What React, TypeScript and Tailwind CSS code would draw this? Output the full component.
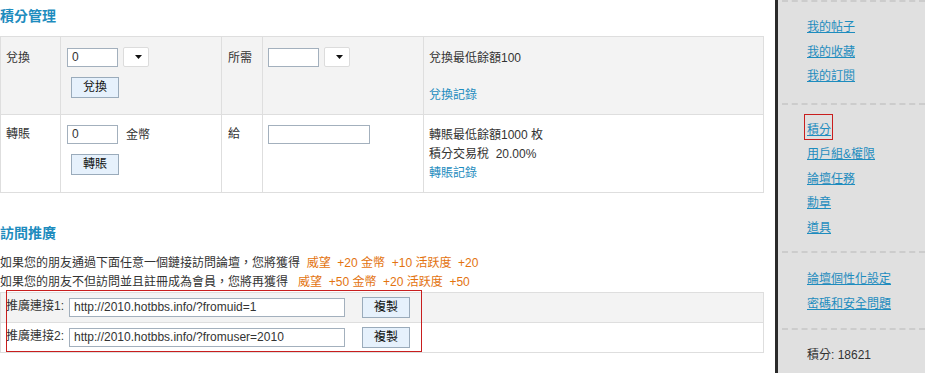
import React from 'react';

const font = "font-['Liberation_Sans','Noto_Sans_CJK_TC',sans-serif]";

function Select() {
  return (
    <div className="w-[26px] h-[20px] bg-white border border-[#dcdcdc] rounded-[2px] flex items-center justify-end pr-[6px]">
      <svg width="7" height="4" viewBox="0 0 7 4"><path d="M0 0h7L3.5 4z" fill="#111" /></svg>
    </div>
  );
}

function Btn({ label }: { label: string }) {
  return (
    <div className="w-[48px] h-[21px] bg-[#e6f1fc] border border-[#9aabbb] text-[#111] text-[12px] leading-[19px] text-center">
      {label}
    </div>
  );
}

function Input({ w, value }: { w: string; value?: string }) {
  return (
    <div className={`${w} h-[19px] bg-white border border-[#a3b0bd] text-[12px] leading-[17px] pl-[4px] text-[#333] overflow-hidden whitespace-nowrap`}>
      {value}
    </div>
  );
}

const link = 'text-[#1e8cbe]';
const orange = 'text-[#e3730f]';

function SideLink({ label, boxed }: { label: string; boxed?: boolean }) {
  return (
    <div className="h-[24.5px] flex items-center pl-[25px]">
      <span className={`${link} underline relative`}>
        {label}
        {boxed && <span className="absolute left-[-3px] top-[-7px] w-[29px] h-[26px] border border-[#c81e1e]" />}
      </span>
    </div>
  );
}

export default function App() {
  return (
    <div className={`${font} text-[12px] text-[#333] w-[925px] h-[373px] flex bg-white overflow-hidden`}>
      {/* Main */}
      <div className="w-[775px] flex flex-col">
        <div className={`h-[36px] pt-[6px] text-[14px] font-bold leading-[20px] ${link}`}>積分管理</div>
        <table className="w-[764px] border-collapse table-fixed">
          <colgroup>
            <col className="w-[60px]" />
            <col className="w-[161px]" />
            <col className="w-[41px]" />
            <col className="w-[161px]" />
            <col />
          </colgroup>
          <tbody>
            <tr className="h-[78px] bg-[#f3f3f3]">
              <td className="border border-[#dedede] align-top pt-[11px] pl-[5px] leading-[20px]">兌換</td>
              <td className="border border-[#dedede] align-top pt-[10px] pl-[6px]">
                <div className="flex gap-[5px] items-center">
                  <Input w="w-[51px]" value="0" />
                  <Select />
                </div>
                <div className="mt-[10px] ml-[4px]"><Btn label="兌換" /></div>
              </td>
              <td className="border border-[#dedede] align-top pt-[11px] pl-[6px] leading-[20px]">所需</td>
              <td className="border border-[#dedede] align-top pt-[10px] pl-[5px]">
                <div className="flex gap-[5px] items-center">
                  <Input w="w-[51px]" />
                  <Select />
                </div>
              </td>
              <td className="border border-[#dedede] align-top pt-[11px] pl-[5px] leading-[20px]">
                <div>兌換最低餘額100</div>
                <div className={`mt-[17px] ${link}`}>兌換記錄</div>
              </td>
            </tr>
            <tr className="h-[78px] bg-white">
              <td className="border border-[#dedede] align-top pt-[9px] pl-[5px] leading-[20px]">轉賬</td>
              <td className="border border-[#dedede] align-top pt-[10px] pl-[6px]">
                <div className="flex gap-[8px] items-center">
                  <Input w="w-[51px]" value="0" />
                  <span>金幣</span>
                </div>
                <div className="mt-[10px] ml-[4px]"><Btn label="轉賬" /></div>
              </td>
              <td className="border border-[#dedede] align-top pt-[9px] pl-[6px] leading-[20px]">給</td>
              <td className="border border-[#dedede] align-top pt-[10px] pl-[5px]">
                <Input w="w-[102px]" />
              </td>
              <td className="border border-[#dedede] align-top pt-[11px] pl-[5px] leading-[19px]">
                <div>轉賬最低餘額1000 枚</div>
                <div>積分交易稅&nbsp; 20.00%</div>
                <div className={link}>轉賬記錄</div>
              </td>
            </tr>
          </tbody>
        </table>

        <div className={`mt-[30px] h-[20px] text-[14px] font-bold leading-[20px] ${link}`}>訪問推廣</div>
        <div className="mt-[10px] leading-[19px] whitespace-nowrap">
          <div className="pt-[1px]">
            如果您的朋友通過下面任意一個鏈接訪問論壇，您將獲得{' '}
            <span className={orange}>&nbsp;威望&nbsp; +20 金幣&nbsp; +10 活跃度&nbsp; +20</span>
          </div>
          <div>
            如果您的朋友不但訪問並且註冊成為會員，您將再獲得{' '}
            <span className={orange}>&nbsp; 威望&nbsp; +50 金幣&nbsp; +20 活跃度&nbsp; +50</span>
          </div>
        </div>

        <div className="relative w-[764px]">
          <table className="w-full border-collapse">
            <tbody>
              <tr className="h-[30px] bg-[#f3f3f3]">
                <td className="border border-[#dedede] pl-[5px]">
                  <div className="flex items-center">
                    <span className="w-[63px] leading-[14px] -mt-[3px]">推廣連接1:</span>
                    <Input w="w-[276px]" value="http://2010.hotbbs.info/?fromuid=1" />
                    <div className="ml-[17px]"><Btn label="複製" /></div>
                  </div>
                </td>
              </tr>
              <tr className="h-[30px] bg-white">
                <td className="border border-[#dedede] pl-[5px]">
                  <div className="flex items-center">
                    <span className="w-[63px] leading-[14px] -mt-[3px]">推廣連接2:</span>
                    <Input w="w-[276px]" value="http://2010.hotbbs.info/?fromuser=2010" />
                    <div className="ml-[17px]"><Btn label="複製" /></div>
                  </div>
                </td>
              </tr>
            </tbody>
          </table>
          <div className="absolute left-[6px] top-[-2px] w-[416px] h-[62px] border border-[#c81e1e] pointer-events-none" />
        </div>
      </div>

      {/* Sidebar */}
      <div className="w-[150px] border-l-[3px] border-[#2a2a2a] bg-[#e0e0e0]">
        <div className="ml-[4px] border-t-2 border-dashed border-[#cccccc] pt-[13px] pb-[14px]">
          <SideLink label="我的帖子" />
          <SideLink label="我的收藏" />
          <SideLink label="我的訂閱" />
        </div>
        <div className="ml-[4px] border-t-2 border-dashed border-[#cccccc] pt-[13px] pb-[11px]">
          <SideLink label="積分" boxed />
          <SideLink label="用戶組&權限" />
          <SideLink label="論壇任務" />
          <SideLink label="勳章" />
          <SideLink label="道具" />
        </div>
        <div className="ml-[4px] border-t-2 border-dashed border-[#cccccc] pt-[14px] pb-[12px]">
          <SideLink label="論壇個性化設定" />
          <SideLink label="密碼和安全問題" />
        </div>
        <div className="ml-[4px] border-t-2 border-dashed border-[#cccccc] pt-[13px] pl-[25px] leading-[24px]">
          積分: 18621
        </div>
      </div>
    </div>
  );
}
